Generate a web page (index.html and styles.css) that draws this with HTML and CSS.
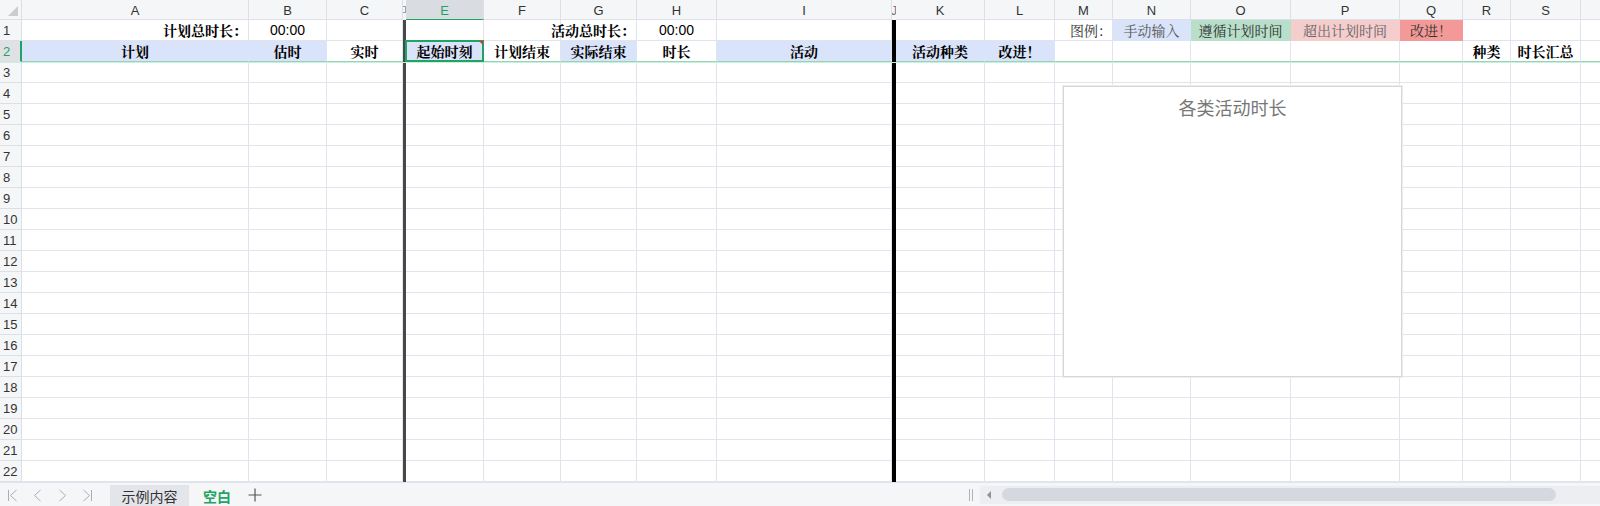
FILE: index.html
```html
<!DOCTYPE html>
<html lang="zh-CN">
<head>
<meta charset="utf-8">
<title>时间记录表</title>
<link rel="stylesheet" href="styles.css">
</head>
<body>
<div class="app">
  <div class="sheet">
    <div class="row head">
      <span class="corner"><em class="tri"></em></span>
      <span>A</span><span>B</span><span>C</span>
      <span class="d"><em class="mark"></em></span>
      <span class="sel">E</span><span>F</span><span>G</span><span>H</span><span>I</span>
      <span class="j">J</span>
      <span>K</span><span>L</span><span>M</span><span>N</span><span>O</span><span>P</span><span>Q</span><span>R</span><span>S</span><span></span>
    </div>
    <div class="row r1">
      <span class="rh">1</span>
      <i class="lab">计划总时长：</i><i class="num">00:00</i><i></i>
      <i class="d"></i>
      <i></i><i></i><i class="lab">活动总时长：</i><i class="num">00:00</i><i></i>
      <i class="j"></i>
      <i></i><i></i><i class="leg right">图例：</i><i class="leg blue c1">手动输入</i><i class="leg green c2">遵循计划时间</i><i class="leg pink c3">超出计划时间</i><i class="leg red c4">改进！</i><i></i><i></i><i></i>
    </div>
    <div class="row r2">
      <span class="rh act">2</span>
      <i class="hd blue">计划</i><i class="hd blue">估时</i><i class="hd">实时</i>
      <i class="d"></i>
      <i class="hd blue cur">起始时刻</i><i class="hd">计划结束</i><i class="hd blue">实际结束</i><i class="hd">时长</i><i class="hd blue">活动</i>
      <i class="j"></i>
      <i class="hd blue">活动种类</i><i class="hd blue">改进！</i><i></i><i></i><i></i><i></i><i></i><i class="hd">种类</i><i class="hd">时长汇总</i><i></i>
    </div>
    <div class="row"><span class="rh">3</span><i></i><i></i><i></i><i class="d"></i><i></i><i></i><i></i><i></i><i></i><i class="j"></i><i></i><i></i><i></i><i></i><i></i><i></i><i></i><i></i><i></i><i></i></div>
    <div class="row"><span class="rh">4</span><i></i><i></i><i></i><i class="d"></i><i></i><i></i><i></i><i></i><i></i><i class="j"></i><i></i><i></i><i></i><i></i><i></i><i></i><i></i><i></i><i></i><i></i></div>
    <div class="row"><span class="rh">5</span><i></i><i></i><i></i><i class="d"></i><i></i><i></i><i></i><i></i><i></i><i class="j"></i><i></i><i></i><i></i><i></i><i></i><i></i><i></i><i></i><i></i><i></i></div>
    <div class="row"><span class="rh">6</span><i></i><i></i><i></i><i class="d"></i><i></i><i></i><i></i><i></i><i></i><i class="j"></i><i></i><i></i><i></i><i></i><i></i><i></i><i></i><i></i><i></i><i></i></div>
    <div class="row"><span class="rh">7</span><i></i><i></i><i></i><i class="d"></i><i></i><i></i><i></i><i></i><i></i><i class="j"></i><i></i><i></i><i></i><i></i><i></i><i></i><i></i><i></i><i></i><i></i></div>
    <div class="row"><span class="rh">8</span><i></i><i></i><i></i><i class="d"></i><i></i><i></i><i></i><i></i><i></i><i class="j"></i><i></i><i></i><i></i><i></i><i></i><i></i><i></i><i></i><i></i><i></i></div>
    <div class="row"><span class="rh">9</span><i></i><i></i><i></i><i class="d"></i><i></i><i></i><i></i><i></i><i></i><i class="j"></i><i></i><i></i><i></i><i></i><i></i><i></i><i></i><i></i><i></i><i></i></div>
    <div class="row"><span class="rh">10</span><i></i><i></i><i></i><i class="d"></i><i></i><i></i><i></i><i></i><i></i><i class="j"></i><i></i><i></i><i></i><i></i><i></i><i></i><i></i><i></i><i></i><i></i></div>
    <div class="row"><span class="rh">11</span><i></i><i></i><i></i><i class="d"></i><i></i><i></i><i></i><i></i><i></i><i class="j"></i><i></i><i></i><i></i><i></i><i></i><i></i><i></i><i></i><i></i><i></i></div>
    <div class="row"><span class="rh">12</span><i></i><i></i><i></i><i class="d"></i><i></i><i></i><i></i><i></i><i></i><i class="j"></i><i></i><i></i><i></i><i></i><i></i><i></i><i></i><i></i><i></i><i></i></div>
    <div class="row"><span class="rh">13</span><i></i><i></i><i></i><i class="d"></i><i></i><i></i><i></i><i></i><i></i><i class="j"></i><i></i><i></i><i></i><i></i><i></i><i></i><i></i><i></i><i></i><i></i></div>
    <div class="row"><span class="rh">14</span><i></i><i></i><i></i><i class="d"></i><i></i><i></i><i></i><i></i><i></i><i class="j"></i><i></i><i></i><i></i><i></i><i></i><i></i><i></i><i></i><i></i><i></i></div>
    <div class="row"><span class="rh">15</span><i></i><i></i><i></i><i class="d"></i><i></i><i></i><i></i><i></i><i></i><i class="j"></i><i></i><i></i><i></i><i></i><i></i><i></i><i></i><i></i><i></i><i></i></div>
    <div class="row"><span class="rh">16</span><i></i><i></i><i></i><i class="d"></i><i></i><i></i><i></i><i></i><i></i><i class="j"></i><i></i><i></i><i></i><i></i><i></i><i></i><i></i><i></i><i></i><i></i></div>
    <div class="row"><span class="rh">17</span><i></i><i></i><i></i><i class="d"></i><i></i><i></i><i></i><i></i><i></i><i class="j"></i><i></i><i></i><i></i><i></i><i></i><i></i><i></i><i></i><i></i><i></i></div>
    <div class="row"><span class="rh">18</span><i></i><i></i><i></i><i class="d"></i><i></i><i></i><i></i><i></i><i></i><i class="j"></i><i></i><i></i><i></i><i></i><i></i><i></i><i></i><i></i><i></i><i></i></div>
    <div class="row"><span class="rh">19</span><i></i><i></i><i></i><i class="d"></i><i></i><i></i><i></i><i></i><i></i><i class="j"></i><i></i><i></i><i></i><i></i><i></i><i></i><i></i><i></i><i></i><i></i></div>
    <div class="row"><span class="rh">20</span><i></i><i></i><i></i><i class="d"></i><i></i><i></i><i></i><i></i><i></i><i class="j"></i><i></i><i></i><i></i><i></i><i></i><i></i><i></i><i></i><i></i><i></i></div>
    <div class="row"><span class="rh">21</span><i></i><i></i><i></i><i class="d"></i><i></i><i></i><i></i><i></i><i></i><i class="j"></i><i></i><i></i><i></i><i></i><i></i><i></i><i></i><i></i><i></i><i></i></div>
    <div class="row"><span class="rh">22</span><i></i><i></i><i></i><i class="d"></i><i></i><i></i><i></i><i></i><i></i><i class="j"></i><i></i><i></i><i></i><i></i><i></i><i></i><i></i><i></i><i></i><i></i></div>

    <div class="chart">
      <div class="chart-title">各类活动时长</div>
    </div>
  </div>

  <div class="bar">
    <div class="nav">
      <span class="navbtn"><svg width="11" height="13" viewBox="0 0 11 13"><path d="M1.5 1v11M9.5 1L3.5 6.5l6 5.5" fill="none" stroke="#a9adb5" stroke-width="1"/></svg></span>
      <span class="navbtn"><svg width="9" height="13" viewBox="0 0 9 13"><path d="M7.5 1L1.5 6.5l6 5.5" fill="none" stroke="#a9adb5" stroke-width="1"/></svg></span>
      <span class="navbtn"><svg width="9" height="13" viewBox="0 0 9 13"><path d="M1.5 1l6 5.5-6 5.5" fill="none" stroke="#a9adb5" stroke-width="1"/></svg></span>
      <span class="navbtn"><svg width="11" height="13" viewBox="0 0 11 13"><path d="M1.5 1l6 5.5-6 5.5M9.5 1v11" fill="none" stroke="#a9adb5" stroke-width="1"/></svg></span>
    </div>
    <div class="tab tab-sample">示例内容</div>
    <div class="tab tab-active">空白</div>
    <span class="add"><svg width="14" height="14" viewBox="0 0 14 14"><path d="M7 0.5v13M0.5 7h13" fill="none" stroke="#555" stroke-width="1.2"/></svg></span>
    <div class="spacer"></div>
    <div class="hscroll">
      <span class="grip"></span>
      <div class="track">
        <span class="arrow"></span>
        <span class="thumb"></span>
      </div>
    </div>
  </div>
</div>
</body>
</html>
```

FILE: styles.css
```css
:root {
  --cols: 22px 227px 78px 76px 3px 78px 77px 76px 80px 175px 4px 89px 70px 58px 78px 100px 109px 63px 48px 70px 80px;
  --grid: #e1e4ec;
  --hdr: #f5f6f8;
  --hdr-line: #dcdfe5;
  --green: #1fa463;
  --blue: #d9e3f9;
  --latin: "Liberation Sans", Arial, sans-serif;
  --cjk: "Noto Serif CJK SC", "Noto Sans CJK SC", serif;
}

* { box-sizing: border-box; }

html, body {
  margin: 0;
  padding: 0;
  background: #fff;
}

body {
  width: 1600px;
  height: 506px;
  overflow: hidden;
  font-family: var(--latin);
  color: #000;
}

.app {
  display: flex;
  flex-direction: column;
  height: 506px;
}

.sheet {
  position: relative;
  height: 482px;
  overflow: hidden;
  background: #fff;
}

.row {
  display: grid;
  grid-template-columns: var(--cols);
  height: 21px;
}

.row > * {
  display: flex;
  align-items: center;
  justify-content: center;
  min-width: 0;
  white-space: nowrap;
  font-style: normal;
  border-right: 1px solid var(--grid);
  border-bottom: 1px solid var(--grid);
}

/* column header row */
.row.head {
  height: 20px;
  background: var(--hdr);
}
.row.head > * {
  border-color: var(--hdr-line);
  font-size: 13px;
  color: #333;
  padding-top: 1px;
}
.row.head > .sel {
  background: #d9dce1;
  color: var(--green);
  border-bottom: 1px solid var(--green);
}
.row.head > .d {
  background: var(--hdr);
  border-right: none;
  position: relative;
}
.mark {
  display: block;
  width: 3px;
  height: 7px;
  border: 1px solid #9aa0a8;
  border-left: none;
  margin-top: -2px;
}
.row.head > .j {
  overflow: hidden;
  border-right: none;
  font-size: 12px;
  color: #777;
  background: var(--hdr);
}
.corner {
  position: relative;
}
.tri {
  position: absolute;
  right: 3px;
  bottom: 3px;
  width: 0;
  height: 0;
  border-left: 10px solid transparent;
  border-bottom: 10px solid #c9ccd1;
}

/* row headers */
.rh {
  background: var(--hdr);
  border-color: var(--hdr-line) !important;
  justify-content: flex-start !important;
  padding-left: 3px;
  font-size: 13px;
  color: #333;
}
.rh.act {
  background: #dfe1e5;
  color: var(--green);
  border-right: 2px solid var(--green) !important;
}

/* hidden column D and narrow column J */
.row > .d {
  background: #484848;
  border: none;
}
.row > .j {
  background: #000;
  border: none;
}

/* cell content */
.lab {
  justify-content: flex-end !important;
  font-family: var(--cjk);
  font-weight: 700;
  font-size: 14px;
  padding-right: 1px;
}
.num {
  font-family: var(--latin);
  font-size: 14px;
  color: #000;
}
.leg {
  font-family: var(--cjk);
  font-size: 14px;
  color: #333;
}
.leg.right {
  justify-content: flex-end !important;
}
.c1 { color: #555; }
.c2 { color: #333; }
.c3 { color: #666; }
.c4 { color: #333; }

.hd {
  font-family: var(--cjk);
  font-weight: 700;
  font-size: 14px;
  color: #000;
}

.blue { background: var(--blue); border-right-color: var(--blue) !important; }
.green { background: #b7dfca; border-right-color: #b7dfca !important; }
.pink { background: #f5cdcd; border-right-color: #f5cdcd !important; }
.red { background: #f39a98; border-right-color: #f39a98 !important; }

.r1 > .leg.blue,
.r1 > .green,
.r1 > .pink,
.r1 > .red {
  border-bottom-color: transparent;
}

/* frozen pane line */
.r2 > * {
  border-bottom: 1px solid #93d6b6;
}
.r2 {
  box-shadow: 0 1px 0 #cbeedd;
  position: relative;
  z-index: 1;
}

/* active cell */
.cur {
  position: relative;
}
.cur::after {
  content: "";
  position: absolute;
  left: -1px;
  top: -1px;
  right: -1px;
  bottom: -1px;
  border: 2px solid var(--green);
}
.cur::before {
  content: "";
  position: absolute;
  right: 0;
  top: 0;
  width: 0;
  height: 0;
  border-left: 4px solid transparent;
  border-top: 4px solid #e0322e;
  z-index: 2;
}

/* chart overlay */
.chart {
  position: absolute;
  left: 1063px;
  top: 86px;
  width: 339px;
  height: 291px;
  background: #fff;
  border: 1px solid #d6d6d6;
  box-shadow: 0 0 0 1px #eeeeee;
  z-index: 3;
}
.chart-title {
  margin-top: 8px;
  text-align: center;
  font-family: "Noto Sans CJK SC", sans-serif;
  font-size: 18px;
  line-height: 24px;
  color: #777;
}

/* bottom sheet tab bar */
.bar {
  display: flex;
  align-items: flex-end;
  height: 24px;
  background: #f5f6f8;
  border-top: 1px solid var(--grid);
}
.nav {
  display: flex;
  align-items: center;
  height: 23px;
  width: 110px;
}
.navbtn {
  width: 25px;
  display: flex;
  justify-content: center;
  align-items: center;
  height: 23px;
  padding-top: 2px;
}
.tab {
  height: 21px;
  display: flex;
  align-items: center;
  justify-content: center;
  font-family: "Noto Sans CJK SC", sans-serif;
  font-size: 14px;
  color: #333;
}
.tab-sample {
  width: 79px;
  background: #e3e5ea;
}
.tab-active {
  width: 56px;
  color: var(--green);
  font-weight: 700;
}
.add {
  width: 20px;
  height: 23px;
  display: flex;
  align-items: center;
  justify-content: center;
}
.spacer {
  flex: 1;
}
.hscroll {
  width: 631px;
  height: 23px;
  display: flex;
  align-items: center;
}
.grip {
  width: 4px;
  height: 12px;
  border-left: 1px solid #aeb2b9;
  border-right: 1px solid #aeb2b9;
  margin-right: 7px;
}
.track {
  flex: 1;
  height: 18px;
  background: #eceef2;
  display: flex;
  align-items: center;
  padding-left: 7px;
}
.arrow {
  width: 0;
  height: 0;
  border-top: 4px solid transparent;
  border-bottom: 4px solid transparent;
  border-right: 4px solid #8c919b;
  margin-right: 11px;
}
.thumb {
  width: 554px;
  height: 13px;
  border-radius: 7px;
  background: #d5d8de;
}
```
